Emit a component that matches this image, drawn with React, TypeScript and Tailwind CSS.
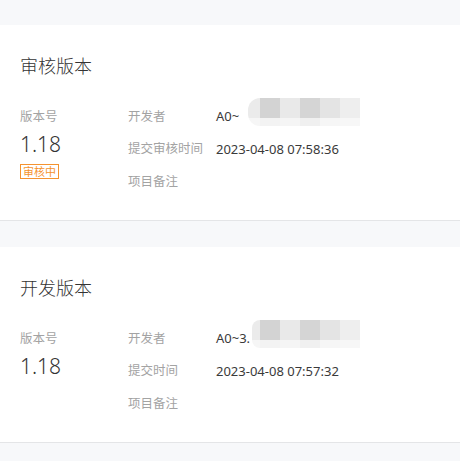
const topCells = ['#d3d3d3', '#e9e9e9', '#d5d5d5', '#e4e4e4', '#eeeeee'];
const bottomCells = ['#f3f3f3', '#f5f5f5', '#f0f0f0', '#f6f6f6', '#f7f7f7'];

// mosaic laid over the developer id
function Mosaic({ lead }: { lead: number }) {
  return (
    <div className="absolute left-[32px] top-[-9px] flex h-[28px]">
      <div className="flex flex-col overflow-hidden rounded-l-full" style={{ width: lead, marginLeft: 12 - lead }}>
        <div className="h-[20px] bg-[#ebebeb]" />
        <div className="h-[8px] bg-[#f6f6f6]" />
      </div>
      {topCells.map((c, i) => (
        <div key={i} className="flex w-[20px] flex-col">
          <div className="h-[20px]" style={{ backgroundColor: c }} />
          <div className="h-[8px]" style={{ backgroundColor: bottomCells[i] }} />
        </div>
      ))}
    </div>
  );
}

type Version = {
  title: string;
  developer: string;
  lead: number;
  timeLabel: string;
  time: string;
  reviewing?: boolean;
};

const versions: Version[] = [
  { title: '审核版本', developer: 'A0~', lead: 12, timeLabel: '提交审核时间', time: '2023-04-08 07:58:36', reviewing: true },
  { title: '开发版本', developer: 'A0~3.', lead: 8, timeLabel: '提交时间', time: '2023-04-08 07:57:32' },
];

function VersionCard({ v }: { v: Version }) {
  return (
    <div className="bg-white border-b border-[#e4e5e7] px-5 pt-[30px] pb-[22px]">
      <h2 className="text-[18px] leading-[22px] font-light text-[#333]">{v.title}</h2>
      <div className="mt-[24px] flex">
        <div className="w-[108px] pt-[6px]">
          <div className="text-[12.5px] leading-[20px] text-[#a3a3a3]">版本号</div>
          <div className="mt-[3px] text-[21px] leading-[28px] font-light text-[#333]">1.18</div>
          {v.reviewing && (
            <span className="mt-[5px] inline-block border border-[#f5932f] px-[2px] text-[11px] leading-[13px] text-[#f5932f]">
              审核中
            </span>
          )}
        </div>
        <div className="flex flex-col">
          <div className="flex h-[32px] items-center">
            <span className="w-[88px] text-[12.5px] text-[#a3a3a3]">开发者</span>
            <span className="relative text-[13px] text-[#3a3a3a]">
              {v.developer}
              <Mosaic lead={v.lead} />
            </span>
          </div>
          <div className="flex h-[33px] items-center">
            <span className="w-[88px] text-[12.5px] text-[#a3a3a3]">{v.timeLabel}</span>
            <span className="text-[13px] text-[#3a3a3a]">{v.time}</span>
          </div>
          <div className="flex h-[32px] items-center">
            <span className="w-[88px] text-[12.5px] text-[#a3a3a3]">项目备注</span>
          </div>
        </div>
      </div>
    </div>
  );
}

export default function App() {
  return (
    <div
      className="min-h-[461px] bg-[#f7f8fa] pt-[25px]"
      style={{ fontFamily: '"Noto Sans", "Noto Sans CJK SC", sans-serif' }}
    >
      <div className="flex flex-col gap-[26px]">
        {versions.map((v) => (
          <VersionCard key={v.title} v={v} />
        ))}
      </div>
    </div>
  );
}
